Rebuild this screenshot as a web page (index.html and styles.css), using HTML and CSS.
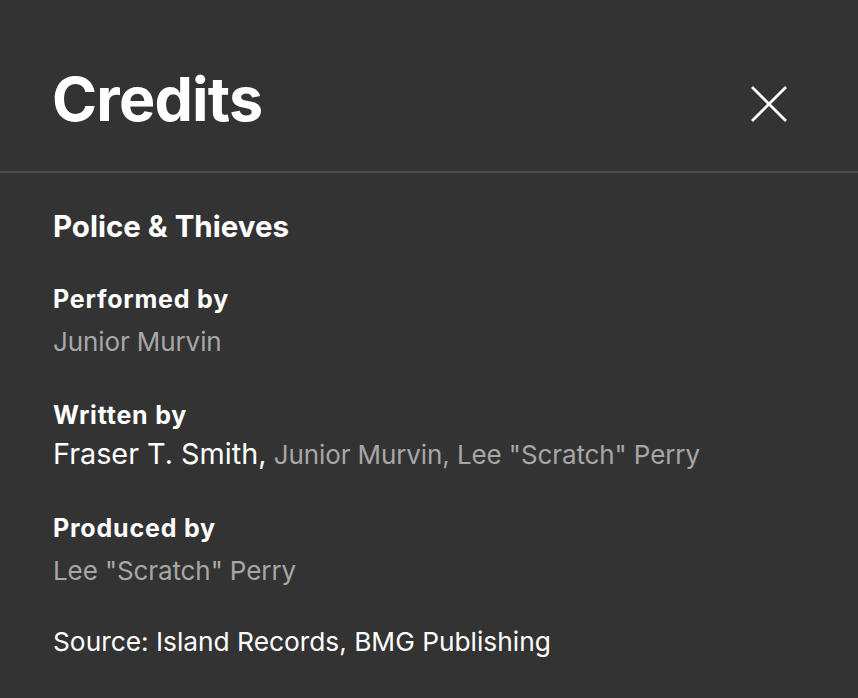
FILE: index.html
```html
<!DOCTYPE html>
<html>
<head>
<meta charset="utf-8">
<link rel="stylesheet" href="styles.css">
</head>
<body>
<div class="dialog">
  <header class="head">
    <h1 class="title">Credits</h1>
    <button class="close" aria-label="Close">
      <svg width="36" height="36" viewBox="0 0 36 36"><path d="M1 1 L35 35 M35 1 L1 35" stroke="#fff" stroke-width="2.7" fill="none"/></svg>
    </button>
  </header>
  <main class="body">
    <h2 class="song">Police &amp; Thieves</h2>
    <section class="group">
      <h3 class="role">Performed by</h3>
      <p class="names">Junior Murvin</p>
    </section>
    <section class="group">
      <h3 class="role">Written by</h3>
      <p class="names names-tight"><span class="lead">Fraser T. Smith,</span> Junior Murvin, Lee "Scratch" Perry</p>
    </section>
    <section class="group group-last">
      <h3 class="role">Produced by</h3>
      <p class="names">Lee "Scratch" Perry</p>
    </section>
    <p class="source">Source: Island Records, BMG Publishing</p>
  </main>
</div>
</body>
</html>
```
FILE: styles.css
```css
html, body {
  margin: 0;
  padding: 0;
  background: #333333;
  height: 100%;
}
body {
  font-family: Inter, "Noto Sans", sans-serif;
  color: #ffffff;
}
.dialog {
  width: 858px;
}
.head {
  height: 173px;
  box-sizing: border-box;
  border-bottom: 2px solid #4b4b4b;
  display: flex;
  align-items: flex-start;
  justify-content: space-between;
  padding: 69px 71px 0 52px;
}
.title {
  margin: 0;
  font-size: 61px;
  font-weight: 700;
  letter-spacing: -0.8px;
  line-height: 61px;
}
.close {
  background: none;
  border: 0;
  padding: 0;
  margin-top: 17px;
  width: 36px;
  height: 36px;
  display: flex;
  cursor: pointer;
}
.body {
  padding: 35px 53px 0;
}
.song {
  margin: 0 0 40px;
  font-size: 29.5px;
  font-weight: 700;
  line-height: 36px;
}
.group {
  margin-bottom: 41px;
}
.group-last {
  margin-bottom: 36.5px;
}
.role {
  margin: 0;
  font-size: 25px;
  font-weight: 700;
  letter-spacing: 0.8px;
  line-height: 30px;
}
.names {
  margin: 11px 0 0;
  font-size: 26px;
  line-height: 34px;
  letter-spacing: -0.1px;
  color: #a7a7a7;
}
.names-tight {
  margin-top: 7px;
}
.lead {
  color: #ffffff;
  font-size: 28.8px;
  letter-spacing: 0;
}
.source {
  margin: 0;
  font-size: 26.3px;
  line-height: 34px;
  color: #ffffff;
}
```
